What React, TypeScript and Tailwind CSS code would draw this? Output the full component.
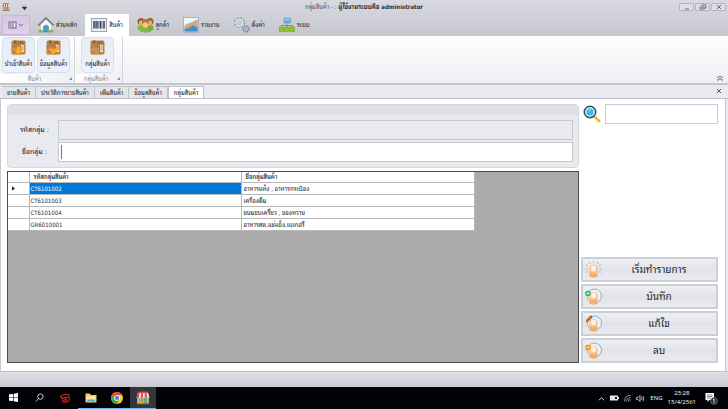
import React, { useState } from 'react';

const RIBBON_TABS = [
  { id: 'home', label: 'ส่วนหลัก' },
  { id: 'product', label: 'สินค้า' },
  { id: 'customer', label: 'ลูกค้า' },
  { id: 'report', label: 'รายงาน' },
  { id: 'settings', label: 'ตั้งค่า' },
  { id: 'system', label: 'ระบบ' },
];

const DOC_TABS = ['ขายสินค้า', 'ประวัติการขายสินค้า', 'เพิ่มสินค้า', 'ข้อมูลสินค้า', 'กลุ่มสินค้า'];

const GROUPS = [
  { code: 'CT6101002', name: 'อาหารแห้ง , อาหารกระป๋อง' },
  { code: 'CT6101003', name: 'เครื่องดื่ม' },
  { code: 'CT6101004', name: 'ขนมขบเครี้ยว , ของหวาน' },
  { code: 'GR6010001', name: 'อาหารสด,แช่แข็ง,เบเกอรี่' },
];

const StoreIcon = ({ className }: { className: string }) => (
  <svg viewBox="0 0 24 24" className={className} aria-hidden="true">
    <rect x="2" y="10" width="20" height="12" fill="#f0b44c" />
    <rect x="4" y="12" width="7" height="7" fill="#4a94b8" />
    <rect x="13" y="12" width="6" height="10" fill="#6f9fa4" />
    <path d="M5 12v7M8 12v7" stroke="#e9e0c8" />
    <rect x="3" y="1" width="18" height="4" fill="#c8523e" />
    <path d="M3 4h18l2 7H1z" fill="#f4eee6" />
    <path d="M3 4h3l-1 7H1zM9 4h3v7H8zM15 4h3l1 7h-4z" fill="#d3483c" />
    <rect x="1" y="21" width="22" height="2" fill="#9c5a3c" />
  </svg>
);

const TabIcon = ({ id }: { id: string }) => {
  const cls = 'w-4 h-4 shrink-0';
  if (id === 'home') {
    return (
      <svg viewBox="0 0 32 32" className={cls} aria-hidden="true">
        <path d="M5 15 16 5l11 10v15H5z" fill="#f8f6ec" stroke="#c3c8c2" />
        <path d="M1 17 16 2l15 15" fill="none" stroke="#68757a" strokeWidth="3.5" strokeLinejoin="round" />
        <path d="M3 16 16 4l13 12" fill="none" stroke="#a3b4b5" strokeWidth="1.5" />
        <path d="M11 30V19q5-6 10 0v11z" fill="#4b9cc9" stroke="#356e98" />
        <path d="M1 31q0-7 5-6 4 0 4 6zM22 31q0-7 5-6 4 0 4 6z" fill="#8cb83c" />
      </svg>
    );
  }
  if (id === 'product') {
    return (
      <svg viewBox="0 0 32 28" className="w-4 h-3.5 shrink-0" aria-hidden="true">
        <rect x="1" y="1" width="30" height="26" fill="#e8edf3" stroke="#9aa6b6" strokeWidth="2" />
        <path d="M6 6v15M12 6v15M19 6v15M26 6v15" stroke="#35435a" strokeWidth="3" />
        <path d="M9 6v15M15.500 6v15M22 6v15" stroke="#4c5d76" strokeWidth="1.5" />
      </svg>
    );
  }
  if (id === 'customer') {
    return (
      <svg viewBox="0 0 34 32" className="w-[17px] h-4 shrink-0" aria-hidden="true">
        <ellipse cx="17" cy="26" rx="12" ry="5" fill="#69a02e" />
        <ellipse cx="9" cy="22" rx="8" ry="6" fill="#89b846" />
        <ellipse cx="25" cy="22" rx="8" ry="6" fill="#79ab39" />
        <path d="M9 30q1-11 8-11t8 11z" fill="#85b944" />
        <circle cx="8" cy="9" r="7" fill="#9b632d" />
        <circle cx="26" cy="9" r="7" fill="#9b632d" />
        <circle cx="9" cy="12" r="5" fill="#eab681" />
        <circle cx="25" cy="12" r="5" fill="#eab681" />
        <circle cx="17" cy="11" r="7" fill="#b4763a" />
        <circle cx="17" cy="16" r="5.5" fill="#f3c692" />
      </svg>
    );
  }
  if (id === 'report') {
    return (
      <svg viewBox="0 0 32 32" className={cls} aria-hidden="true">
        <rect x="1" y="1" width="30" height="30" fill="#f5f8fb" stroke="#8ca6bc" strokeWidth="1.5" />
        <path d="M3 16 12 12 20 9 29 4v25H3z" fill="#8fc3e4" />
        <path d="M3 19q6 0 10-5l8-2 8-5v22H3z" fill="#efa055" />
        <path d="M3 24l9-2 7-5 10 3v9H3z" fill="#3e91c9" />
      </svg>
    );
  }
  if (id === 'settings') {
    return (
      <svg viewBox="0 0 32 32" className={cls} aria-hidden="true">
        <circle cx="11" cy="11" r="9" fill="none" stroke="#8793a4" strokeWidth="3.5" strokeDasharray="3.6 3.5" />
        <circle cx="11" cy="11" r="6.5" fill="none" stroke="#8793a4" strokeWidth="5" />
        <circle cx="11" cy="11" r="6.5" fill="none" stroke="#e4e9ee" strokeWidth="3.5" />
        <circle cx="24" cy="24" r="6" fill="none" stroke="#6d839f" strokeWidth="3" strokeDasharray="2.6 2.1" />
        <circle cx="24" cy="24" r="4.5" fill="#d6e0e9" stroke="#7f98b3" strokeWidth="2" />
        <circle cx="24" cy="24" r="1.5" fill="#526f92" />
      </svg>
    );
  }
  return (
    <svg viewBox="0 0 32 32" className={cls} aria-hidden="true">
      <path d="M16 13v9M5 22v-5h22v5" fill="none" stroke="#667078" strokeWidth="1.5" />
      <rect x="10" y="2" width="13" height="10" rx="1" fill="#62acd9" stroke="#4585b1" />
      <path d="M11 3h11v4H11z" fill="#93cbea" />
      <rect x="0" y="20" width="10" height="9" rx="1" fill="#91c425" stroke="#689a1b" />
      <rect x="11" y="20" width="10" height="9" rx="1" fill="#91c425" stroke="#689a1b" />
      <rect x="22" y="20" width="10" height="9" rx="1" fill="#91c425" stroke="#689a1b" />
    </svg>
  );
};

const BoxIcon = ({ kind }: { kind: 'import' | 'info' | 'group' }) => (
  <svg viewBox="0 0 30 30" className="w-[15px] h-[15px]" aria-hidden="true">
    <rect x="1" y="1" width="28" height="28" rx="3" fill="#b98449" />
    <path d="M1 14h18v15H4q-3 0-3-3z" fill="#c99256" />
    <path d="M15 2v12M1 14h18v15" fill="none" stroke="#9a6731" />
    <path d="M6 1h5v6H6z" fill="#8f5f2d" />
    <path d="M17 6q5-5 8 1" fill="none" stroke="#6f4720" strokeWidth="2" />
    <rect x="20" y="10" width="6" height="14" fill="#ecdcc0" />
    <path d="M21 13h4M21 16h4M21 19h4" stroke="#876b4c" />
    <path d="M4 24h5" stroke="#8f5f2d" strokeWidth="2" />
    {kind === 'import' && <path d="M12 13h6v7h5l-8 9-8-9h5z" fill="#ffad20" stroke="#ee931a" />}
    {kind === 'info' && <path d="M7 19l4-3 4 5 9-9 4 4-13 13z" fill="#ffad20" stroke="#ee931a" />}
  </svg>
);

const RibbonButton = ({ label, kind }: { label: string; kind: 'import' | 'info' | 'group' }) => (
  <button className="min-w-[33px] h-9 flex flex-col items-center pt-0.5 gap-1 border border-[#d8deea] rounded-sm bg-linear-to-b from-[#e7ecf7] to-[#edf1fb] leading-[10px] whitespace-nowrap">
    <BoxIcon kind={kind} />
    {label}
  </button>
);

const RibbonGroup = ({ caption, children }: { caption: string; children: React.ReactNode }) => (
  <div className="flex flex-col justify-between border-r border-[#d3d5dc]">
    <div className="flex gap-0.5 pl-0.5 pr-1">{children}</div>
    <div className="flex items-center bg-linear-to-r from-white to-[#eeeff4] pr-0.5 leading-[9px] text-[#8d8f99]">
      <span className="flex-1 text-center">{caption}</span>
      <svg viewBox="0 0 4 4" className="w-[3px] h-[3px]" aria-hidden="true">
        <path d="M4 0v4H0z" fill="#85868e" />
      </svg>
    </div>
  </div>
);

const TouchIcon = ({ kind }: { kind: 'start' | 'save' | 'edit' | 'delete' }) => (
  <svg viewBox="0 0 34 34" className="w-[17px] h-[17px] shrink-0" aria-hidden="true">
    {kind === 'start' ? (
      <path d="M6 10l-4-2M5 16H1M6 21l-4 2M10 6 8 2M17 4V0M24 6l2-4M28 10l4-2M29 16h4M28 21l4 2" stroke="#79a7c7" strokeWidth="1.3" />
    ) : (
      <circle cx="19" cy="16" r="14" fill="#eaf1f8" stroke="#77add3" strokeWidth="1.8" />
    )}
    <path d="M9 31V16q0-8 8-8t8 8v15q-8 4-16 0z" fill="#f8bd85" />
    <rect x="12" y="9" width="10" height="12" rx="4" fill="#fff0e2" />
    <path d="M9 24q8 3 16 0v7q-8 4-16 0z" fill="#f6ad6c" />
    {kind === 'save' && (
      <>
        <circle cx="6" cy="11" r="5.5" fill="#3caf5d" />
        <path d="M6 8v6M3 11h6" stroke="#fff" strokeWidth="1.5" />
      </>
    )}
    {kind === 'edit' && (
      <>
        <path d="M1 15 3 9l7-7 4 4-7 7z" fill="#c56a2b" />
        <path d="M10 2l2-1 3 3-1 2z" fill="#693f2d" />
      </>
    )}
    {kind === 'delete' && (
      <>
        <circle cx="6" cy="11" r="5.5" fill="#f29a1d" />
        <path d="M3 11h6" stroke="#fff" strokeWidth="1.5" />
      </>
    )}
  </svg>
);

const ActionButton = ({ label, kind }: { label: string; kind: 'start' | 'save' | 'edit' | 'delete' }) => (
  <button className="w-full h-[25px] flex items-center pl-0.5 border-2 border-[#cdcfd6] bg-linear-to-b from-[#eeeff3] via-[#e1e3e9] to-[#eaebf0] text-[10px] leading-4 text-[#24252e]">
    <TouchIcon kind={kind} />
    <span className="flex-1 text-center">{label}</span>
  </button>
);

const WindowButton = ({ label, children }: { label: string; children: React.ReactNode }) => (
  <button aria-label={label} className="w-[15px] h-2 flex items-center justify-center border border-[#b4b6bf] rounded-[1px] bg-[#dcdde4]">
    <svg viewBox="0 0 8 6" className="w-2 h-1.5" fill="none" stroke="#6d6f79">{children}</svg>
  </button>
);

const TaskItem = ({ label, state, children }: { label: string; state?: string; children: React.ReactNode }) => (
  <button
    aria-label={label}
    className={`w-[26px] flex items-center justify-center border-b ${
      state === 'active' ? 'bg-[#34363b] border-[#76b9ed]' : state === 'open' ? 'border-[#76b9ed]' : 'border-transparent'
    }`}
  >
    {children}
  </button>
);

const App: React.FC = () => {
  const [ribbonTab, setRibbonTab] = useState('product');
  const [docTab, setDocTab] = useState(4);
  const [selected, setSelected] = useState(0);
  const [name, setName] = useState('');
  const [search, setSearch] = useState('');

  return (
    <div className="min-h-screen flex flex-col bg-[#e9eaef] text-[#24252e] font-['DejaVu_Sans_Condensed','Noto_Sans_Thai_Looped','Noto_Serif_Thai',sans-serif] text-[6px] leading-[10px]">
      <div className="bg-linear-to-b from-[#d9dae1] to-[#c5c6ce]">
        <header className="h-3.5 flex items-center px-0.5">
          <div className="flex-1 flex items-center gap-3">
            <StoreIcon className="w-2 h-2" />
            <button aria-label="Customize" className="text-[#30313a]">
              <svg viewBox="0 0 5 5" className="w-[5px] h-[5px]"><path d="M1 0h3M0 2h5L2.500 5z" fill="currentColor" stroke="currentColor" strokeWidth=".4" /></svg>
            </button>
          </div>
          <h1 className="whitespace-nowrap text-[#5c5d68]">
            กลุ่มสินค้า - : <span className="font-bold text-[#2d2e38]">ผู้ใช้งานระบบคือ administrator</span>
          </h1>
          <div className="flex-1 flex justify-end gap-px">
            <WindowButton label="Minimize"><path d="M2 5h4" /></WindowButton>
            <WindowButton label="Restore"><path d="M3 2V1h4v3H5M1 3h4v2H1z" /></WindowButton>
            <WindowButton label="Close"><path d="M2 1l4 4M6 1 2 5" /></WindowButton>
          </div>
        </header>
        <nav className="h-[22px] flex gap-0.5 pl-0.5">
          <button aria-label="Menu" className="w-7 h-5 mt-px flex items-center justify-center bg-linear-to-b from-[#d8c4e4] to-[#e3cdee] border border-[#cdb5da]">
            <svg viewBox="0 0 16 8" className="w-4 h-2" fill="none" stroke="#75687f">
              <rect x="1" y="1" width="7" height="6" fill="#eee7f2" />
              <path d="M5 1v6M2 3h2M2 5h2M11 3l2 2 2-2" />
            </svg>
          </button>
          {RIBBON_TABS.map((t) => (
            <button
              key={t.id}
              onClick={() => setRibbonTab(t.id)}
              className={`flex items-center gap-0.5 px-1.5 whitespace-nowrap ${ribbonTab === t.id ? 'bg-white' : ''}`}
            >
              <TabIcon id={t.id} />
              {t.label}
            </button>
          ))}
        </nav>
      </div>

      <div className="h-[49px] flex border-b-2 border-[#c3c4cc] bg-linear-to-b from-white to-[#eeeff3] pt-px">
        <RibbonGroup caption="สินค้า">
          <RibbonButton label="นำเข้าสินค้า" kind="import" />
          <RibbonButton label="ข้อมูลสินค้า" kind="info" />
        </RibbonGroup>
        <RibbonGroup caption="กลุ่มสินค้า">
          <div className="px-1">
            <RibbonButton label="กลุ่มสินค้า" kind="group" />
          </div>
        </RibbonGroup>
        <button aria-label="Collapse ribbon" className="ml-auto self-end mr-1 mb-0.5">
          <svg viewBox="0 0 8 6" className="w-2 h-1.5" fill="none" stroke="#777984"><path d="M1 3l3-2 3 2M1 5h2V4l1-1 1 1v1h2" /></svg>
        </button>
      </div>

      <div className="h-3.5 flex items-end border-b border-[#bfc1ca] pl-0.5">
        {DOC_TABS.map((label, i) => (
          <button
            key={label}
            onClick={() => setDocTab(i)}
            className={`h-3 px-[5px] border border-b-0 border-[#bfc1ca] whitespace-nowrap ${docTab === i ? 'bg-white' : 'bg-[#e4e5ea] border-l-0'}`}
          >
            {label}
          </button>
        ))}
        <button aria-label="Close tab" className="ml-auto mr-1.5 mb-1">
          <svg viewBox="0 0 6 6" className="w-1.5 h-1.5" stroke="#555762"><path d="M1 1l4 4M5 1 1 5" /></svg>
        </button>
      </div>

      <main className="flex-1 flex gap-0.5 bg-white border-x border-[#c7c8d0] mr-0.5 pl-1.5 pr-[7px] pt-[5px] pb-2">
        <div className="flex-1 flex flex-col gap-[3px]">
          <form className="border border-[#d6d8df] rounded-sm bg-[#e9eaef]">
            <div className="h-2.5 bg-[#e0e1e6]" />
            <div className="flex flex-col gap-0.5 pt-[5px] pr-[5px] pb-[5px] text-[7px]">
              <div className="flex items-center">
                <label htmlFor="code" className="w-[50px] pl-3 whitespace-nowrap">รหัสกลุ่ม :</label>
                <input id="code" readOnly className="flex-1 h-5 px-1 border border-[#c6c8d0] bg-[#e9eaef] outline-none" />
              </div>
              <div className="flex items-center">
                <label htmlFor="name" className="w-[50px] pl-3.5 whitespace-nowrap">ชื่อกลุ่ม :</label>
                <div className="flex-1 h-5 flex items-center pl-0.5 border border-[#c6c8d0] bg-white">
                  <span className="w-px h-3.5 bg-[#70717a]" />
                  <input id="name" value={name} onChange={(e) => setName(e.target.value)} className="flex-1 min-w-0 h-full bg-transparent outline-none" />
                </div>
              </div>
            </div>
          </form>

          <div className="flex-1 border border-[#4b4b4e] bg-[#ababab]">
            <table className="w-[467px] table-fixed border-collapse bg-white text-left">
              <thead>
                <tr className="h-2.5">
                  <th className="w-[21px] p-0 border-r border-b border-[#b7b7b7]" aria-label="row" />
                  <th className="w-[212px] p-0 pl-1 border-r border-b border-[#b7b7b7] font-medium">รหัสกลุ่มสินค้า</th>
                  <th className="p-0 pl-1 border-b border-r border-[#b7b7b7] font-medium">ชื่อกลุ่มสินค้า</th>
                </tr>
              </thead>
              <tbody>
                {GROUPS.map((g, i) => (
                  <tr key={g.code} className="h-3" onClick={() => setSelected(i)}>
                    <td className="p-0 border-r border-b border-[#b7b7b7]">
                      {selected === i && (
                        <svg viewBox="0 0 4 6" className="w-[3px] h-[5px] ml-1"><path d="M0 0l4 3-4 3z" fill="#222" /></svg>
                      )}
                    </td>
                    <td className={`p-0 pl-px border-r border-b border-[#b7b7b7] ${selected === i ? 'bg-[#0078d7] text-white' : ''}`}>{g.code}</td>
                    <td className="p-0 pl-0.5 border-r border-b border-[#b7b7b7]">{g.name}</td>
                  </tr>
                ))}
              </tbody>
            </table>
          </div>
        </div>

        <aside className="w-[137px] flex flex-col justify-between">
          <div className="flex items-center gap-1 pl-0.5">
            <label htmlFor="search" aria-label="Search">
              <svg viewBox="0 0 36 36" className="w-[18px] h-[18px]">
                <path d="M24 24l8 8" stroke="#f5bb3c" strokeWidth="6" strokeLinecap="round" />
                <circle cx="14" cy="14" r="11.500" fill="#bee8f8" stroke="#384d5c" strokeWidth="3" />
                <circle cx="14" cy="14" r="7" fill="#3fb9e3" />
                <path d="M10 12q2-4 6-2" fill="none" stroke="#8cdcf3" strokeWidth="2" />
              </svg>
            </label>
            <input id="search" value={search} onChange={(e) => setSearch(e.target.value)} className="flex-1 min-w-0 h-5 px-1 border border-[#cbccd3] bg-white outline-none" />
          </div>
          <div className="flex flex-col gap-0.5">
            <ActionButton label="เริ่มทำรายการ" kind="start" />
            <ActionButton label="บันทึก" kind="save" />
            <ActionButton label="แก้ไข" kind="edit" />
            <ActionButton label="ลบ" kind="delete" />
          </div>
        </aside>
      </main>

      <div className="h-4 border-t border-[#bfc0c8] bg-linear-to-b from-[#dfe0e6] to-[#c9cad2]" />

      <footer className="h-[22px] flex bg-[#020306] text-white font-['Open_Sans','Noto_Sans',sans-serif]">
        <TaskItem label="Start">
          <svg viewBox="0 0 10 10" className="w-[9px] h-[9px]" fill="#fff"><path d="M0 1.500 4.500 1v3.700H0zM5.200.8 10 0v4.700H5.200zM0 5.300h4.500V9L0 8.500zM5.200 5.300H10V10l-4.800-.8z" /></svg>
        </TaskItem>
        <TaskItem label="Search">
          <svg viewBox="0 0 10 10" className="w-[9px] h-[9px]" fill="none" stroke="#ddd"><circle cx="6" cy="4" r="3" /><path d="M4 6 1 9.500" /></svg>
        </TaskItem>
        <TaskItem label="Garena">
          <svg viewBox="0 0 12 10" className="w-3 h-2.5" fill="none" stroke="#b5241d" strokeWidth="1.300"><path d="M1 4q3-4 10-2M1 4l3 1 7-1M4 5q-2 3 2 4.500M7 5v4q4 0 3-3.500M6 6v2" /></svg>
        </TaskItem>
        <TaskItem label="File Explorer" state="open">
          <svg viewBox="0 0 24 20" className="w-3 h-2.5"><path d="M1 1h9l2 3h11v15H1z" fill="#f1cb5c" /><path d="M3 6h18v9H3z" fill="#fae7a0" /><path d="M5 19v-6h14v6h-3v-3H8v3z" fill="#4eabd8" /></svg>
        </TaskItem>
        <TaskItem label="Chrome" state="open">
          <svg viewBox="0 0 24 24" className="w-3 h-3">
            <circle cx="12" cy="12" r="12" fill="#fbc72e" />
            <path d="M1.600 6A12 12 0 0 1 22.400 6H12a6 6 0 0 0-5 9z" fill="#de4a3c" />
            <path d="M1.600 6A12 12 0 0 0 12 24l5-9a6 6 0 0 1-10 0z" fill="#3aa757" />
            <circle cx="12" cy="12" r="5.500" fill="#fff" />
            <circle cx="12" cy="12" r="4.300" fill="#4385ee" />
          </svg>
        </TaskItem>
        <TaskItem label="POS" state="active">
          <StoreIcon className="w-3.5 h-3.5" />
        </TaskItem>
        <div className="ml-auto flex items-center gap-[5px] pr-2.5">
          <svg viewBox="0 0 8 8" className="w-[7px] h-[7px]" fill="none" stroke="#eee"><path d="M1 6l3-3 3 3" /></svg>
          <svg viewBox="0 0 9 6" className="w-[9px] h-1.5"><rect x=".5" y="1" width="7" height="4" fill="#ddd" stroke="#eee" /><path d="M8 2h1v2H8z" fill="#eee" /><path d="M5 2h2v2H5z" fill="#111" /></svg>
          <svg viewBox="0 0 14 14" className="w-[7px] h-[7px]" fill="none" stroke="#bbb" strokeWidth="1.500"><path d="M1 13Q1 1 13 1M5 13q0-8 8-8M9 13q0-4 4-4M12 12h1" /></svg>
          <svg viewBox="0 0 18 14" className="w-[9px] h-[7px]" fill="none" stroke="#eee" strokeWidth="1.500"><path d="M1 5h3l4-4v12L4 9H1zM11 4q2 3 0 6M14 2q3 5 0 10" /></svg>
          <span className="leading-[9px]">ENG</span>
          <div className="text-center leading-[9px]">
            <div>23:28</div>
            <div>15/4/2561</div>
          </div>
          <button aria-label="Notifications" className="ml-1">
            <svg viewBox="0 0 26 26" className="w-[13px] h-[13px]">
              <path d="M1 2h17v14h-9l-4 4v-4H1z" fill="#fff" />
              <path d="M4 6h11M4 9h11M4 12h8" stroke="#222" />
              <circle cx="18" cy="18" r="7" fill="#303237" stroke="#9a9b9e" />
              <path d="M16 16l2-2v8" fill="none" stroke="#fff" strokeWidth="1.500" />
            </svg>
          </button>
        </div>
      </footer>
    </div>
  );
};

export default App;
